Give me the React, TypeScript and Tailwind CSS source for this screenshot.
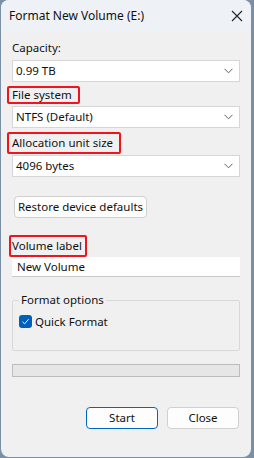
import React from 'react';

const font = { fontFamily: '"Noto Sans", "Open Sans", sans-serif' };

const Chevron = () => (
  <svg width="9" height="6" viewBox="0 0 9 6" className="shrink-0">
    <path d="M0.5 0.8 L4.5 4.8 L8.5 0.8" fill="none" stroke="#5f5f5f" strokeWidth="1" />
  </svg>
);

const Select: React.FC<{ value: string; className?: string }> = ({ value, className = '' }) => (
  <div className={`h-[22px] bg-white border border-[#d6d6d6] flex items-center justify-between pl-[3px] pr-[6px] ${className}`}>
    <span>{value}</span>
    <Chevron />
  </div>
);

const Marked: React.FC<{ children: React.ReactNode; className?: string }> = ({ children, className = '' }) => (
  <div className={`self-start border-2 border-[#f0141e] rounded-[2px] flex items-center ${className}`}>
    {children}
  </div>
);

export default function App() {
  return (
    <div className="w-[254px] h-[458px] bg-[#7a90a6] pl-[1px] pr-[3px] pb-[1px] text-[11.5px] text-[#111]" style={font}>
      <div className="h-full rounded-[8px] bg-[#f0f0f0] flex flex-col overflow-hidden">
        <div className="h-[31px] shrink-0 bg-[#eef2f7] flex items-center justify-between pl-[8px] pr-[8px]">
          <span className="text-[12px]">Format New Volume (E:)</span>
          <svg width="12" height="12" viewBox="0 0 12 12">
            <path d="M1 1 L11 11 M11 1 L1 11" stroke="#222" strokeWidth="1.1" />
          </svg>
        </div>

        <div className="flex flex-col px-[11px]">
          <div className="mt-[9px] h-[16px] leading-[16px]">Capacity:</div>
          <Select value="0.99 TB" className="mt-[4px]" />

          <Marked className="mt-[4px] -ml-[5px] h-[18px] pl-[3px] pr-[6px]">
            <span className="leading-[14px]">File system</span>
          </Marked>
          <Select value="NTFS (Default)" className="mt-[2px] h-[21px]" />

          <Marked className="mt-[4px] -ml-[5px] h-[22px] pl-[3px] pr-[6px]">
            <span>Allocation unit size</span>
          </Marked>
          <Select value="4096 bytes" className="mt-[1px] h-[21px]" />

          <button className="mt-[19px] ml-[2px] self-start h-[22px] w-[133px] bg-[#fdfdfd] border border-[#d0d0d0] rounded-[4px] text-center">
            Restore device defaults
          </button>

          <Marked className="mt-[17px] -ml-[3px] h-[22px] pl-[1px] pr-[3px]">
            <span>Volume label</span>
          </Marked>
          <div className="h-[20px] bg-white border-b border-[#c8c8c8] flex items-center pl-[5px]">New Volume</div>

          <fieldset className="mt-[16px] h-[58px] border border-[#d8d8d8] pl-[6px] pr-[2px] rounded-[2px]">
            <legend className="px-[2px] leading-[14px]">Format options</legend>
            <label className="mt-[6px] flex items-center gap-[3px]">
              <span className="w-[13px] h-[13px] rounded-[3px] bg-[#005fb8] flex items-center justify-center">
                <svg width="9" height="9" viewBox="0 0 9 9">
                  <path d="M1.5 4.8 L3.6 6.8 L7.6 2.2" fill="none" stroke="#fff" strokeWidth="1" />
                </svg>
              </span>
              <span>Quick Format</span>
            </label>
          </fieldset>

          <div className="mt-[13px] h-[13px] bg-[#e6e6e6] border border-[#bcbcbc]" />

          <div className="mt-[30px] flex justify-end gap-[9px] pr-[1px]">
            <button className="w-[72px] h-[22px] bg-[#fdfdfd] border border-[#0067c0] rounded-[4px]">Start</button>
            <button className="w-[72px] h-[22px] bg-[#fdfdfd] border border-[#d0d0d0] rounded-[4px]">Close</button>
          </div>
        </div>
      </div>
    </div>
  );
}
